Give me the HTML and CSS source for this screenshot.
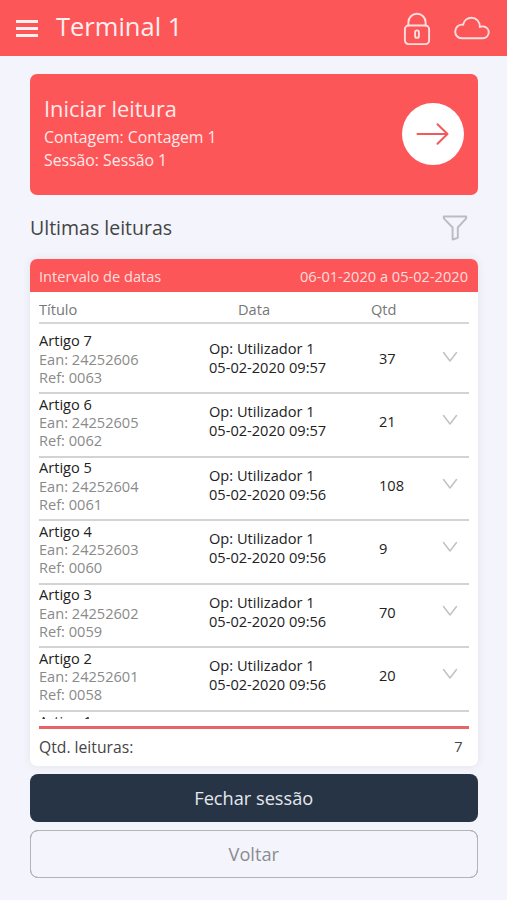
FILE: index.html
```html
<!DOCTYPE html>
<html lang="pt">
<head>
<meta charset="utf-8">
<title>Terminal 1</title>
<link rel="stylesheet" href="styles.css">
</head>
<body>
<header class="topbar">
  <div class="menu"><span></span><span></span><span></span></div>
  <h1>Terminal 1</h1>
  <svg class="lock" width="28" height="34" viewBox="0 0 28 34"><rect x="1.9" y="13.5" width="24.2" height="18.6" rx="3.6"/><path d="M5.400 13.500V10.300a8.600 8.600 0 0 1 17.200 0V13.500"/><rect x="12.100" y="18.400" width="3.800" height="7.400" rx="1.900"/></svg>
  <svg class="cloud" width="36" height="24" viewBox="0 0 36 24"><path d="M7.500 22.200h21.200a5.900 5.900 0 0 0 1.200-11.700c-1.400-.3-2.800-.1-4 .5C26 5.700 22.300 1.800 17.500 1.800c-4.200 0-7.600 2.900-8.400 6.900C4.900 8.100 1.200 11.300 1.200 15.700c0 3.500 2.700 6.500 6.300 6.500z"/></svg>
</header>
<main>
  <section class="start">
    <div>
      <h2>Iniciar leitura</h2>
      <p>Contagem: Contagem 1</p>
      <p>Sessão: Sessão 1</p>
    </div>
    <div class="go"><svg width="34" height="24" viewBox="0 0 34 24"><path d="M1.500 12H31.500M21.500 2.300L31.500 12l-10 9.700"/></svg></div>
  </section>
  <div class="heading">
    <h3>Ultimas leituras</h3>
    <svg width="26" height="26" viewBox="0 0 26 26"><path d="M1.800 1.500h22.400v1.800L15.800 12.500v10.300l-5.200 1.700v-12L1.800 3.300z"/></svg>
  </div>
  <section class="card">
    <div class="range"><span>Intervalo de datas</span><span>06-01-2020 a 05-02-2020</span></div>
    <div class="body">
      <div class="cols"><span>Título</span><span class="c-date">Data</span><span class="c-qty">Qtd</span></div>
      <div class="list">
        <div class="row"><div class="item"><b>Artigo 7</b><br>Ean: 24252606<br>Ref: 0063</div><div class="op">Op: Utilizador 1<br>05-02-2020 09:57</div><div class="qty">37</div><svg width="16" height="12" viewBox="0 0 16 12"><path d="M1.500 1.500L8 10l6.500-8.500"/></svg></div>
        <div class="row"><div class="item"><b>Artigo 6</b><br>Ean: 24252605<br>Ref: 0062</div><div class="op">Op: Utilizador 1<br>05-02-2020 09:57</div><div class="qty">21</div><svg width="16" height="12" viewBox="0 0 16 12"><path d="M1.500 1.500L8 10l6.500-8.500"/></svg></div>
        <div class="row"><div class="item"><b>Artigo 5</b><br>Ean: 24252604<br>Ref: 0061</div><div class="op">Op: Utilizador 1<br>05-02-2020 09:56</div><div class="qty">108</div><svg width="16" height="12" viewBox="0 0 16 12"><path d="M1.500 1.500L8 10l6.500-8.500"/></svg></div>
        <div class="row"><div class="item"><b>Artigo 4</b><br>Ean: 24252603<br>Ref: 0060</div><div class="op">Op: Utilizador 1<br>05-02-2020 09:56</div><div class="qty">9</div><svg width="16" height="12" viewBox="0 0 16 12"><path d="M1.500 1.500L8 10l6.500-8.500"/></svg></div>
        <div class="row"><div class="item"><b>Artigo 3</b><br>Ean: 24252602<br>Ref: 0059</div><div class="op">Op: Utilizador 1<br>05-02-2020 09:56</div><div class="qty">70</div><svg width="16" height="12" viewBox="0 0 16 12"><path d="M1.500 1.500L8 10l6.500-8.500"/></svg></div>
        <div class="row"><div class="item"><b>Artigo 2</b><br>Ean: 24252601<br>Ref: 0058</div><div class="op">Op: Utilizador 1<br>05-02-2020 09:56</div><div class="qty">20</div><svg width="16" height="12" viewBox="0 0 16 12"><path d="M1.500 1.500L8 10l6.500-8.500"/></svg></div>
        <div class="row"><div class="item"><b>Artigo 1</b></div></div>
      </div>
      <div class="total"><span>Qtd. leituras:</span><span class="sum">7</span></div>
    </div>
  </section>
  <button class="btn dark">Fechar sessão</button>
  <button class="btn light">Voltar</button>
</main>
</body>
</html>
```
FILE: styles.css
```css
* { box-sizing: border-box; margin: 0; padding: 0; }
body {
  height: 900px;
  overflow: hidden;
  background: #f3f4fc;
  font-family: "Open Sans", sans-serif;
  font-size: 14.6px;
  color: #222;
}
h1, h2, h3, b { font-weight: 400; }
svg { display: block; fill: none; stroke-linejoin: round; stroke-linecap: round; flex: none; }
.topbar {
  display: flex;
  align-items: center;
  height: 56px;
  padding: 0 17px 0 16px;
  background: #fd5659;
  color: #ffefef;
}
.menu { display: flex; flex-direction: column; gap: 4px; width: 22px; margin-top: 1px; }
.menu span { height: 3px; background: #ffefef; }
.topbar h1 { margin: -4px auto 0 18px; font-size: 25.5px; line-height: 36px; }
.lock, .cloud { stroke: #ffdede; stroke-width: 1.9; }
.lock { margin-top: 1px; }
.cloud { margin-left: 23px; }
main { padding: 18px 29.5px 0 30px; }
.start {
  display: flex;
  justify-content: space-between;
  height: 121px;
  padding: 19px 14px 0;
  border-radius: 7px;
  background: #fd5659;
  color: #ffe9e9;
}
.start h2 { margin-bottom: 1px; font-size: 21.800px; line-height: 32px; }
.start p { font-size: 15.800px; line-height: 23px; }
.go {
  display: flex;
  align-items: center;
  justify-content: center;
  width: 62px;
  height: 62px;
  margin-top: 10px;
  border-radius: 50%;
  background: #fff;
}
.go svg { stroke: #f4585c; stroke-width: 2; }
.heading {
  display: flex;
  align-items: center;
  justify-content: space-between;
  height: 64px;
  padding: 0 10px 0 0;
}
.heading h3 { font-size: 19.500px; color: #444; }
.heading svg { margin-top: 1px; stroke: #bcbcc0; stroke-width: 1.9; }
.card {
  height: 507px;
  border-radius: 7px;
  background: #fff;
  box-shadow: 0 0 9px rgba(60, 60, 60, .09);
  overflow: hidden;
}
.range {
  display: flex;
  align-items: center;
  justify-content: space-between;
  height: 33px;
  padding: 1px 9.500px 0 9px;
  background: #fd5659;
  color: #ffdede;
}
.body { padding: 0 9px; }
.cols {
  display: grid;
  grid-template-columns: 199px 133px 1fr;
  height: 31.500px;
  line-height: 34.500px;
  border-bottom: 2px solid #d6d6d6;
  color: #777;
}
.list { height: 395px; padding-top: 7px; overflow: hidden; }
.row {
  display: grid;
  grid-template-columns: 170px 170px 63px 1fr;
  height: 63.5px;
  border-bottom: 2px solid #d3d3d3;
}
.item { padding-top: .8px; line-height: 18.200px; color: #8a8a8a; }
.item b { color: #222; }
.op { padding-top: 8px; line-height: 19.400px; }
.qty { padding-top: 17px; line-height: 20px; }
.row svg { margin-top: 20px; stroke: #c2c2c2; stroke-width: 1.5; }
.total {
  display: flex;
  justify-content: space-between;
  margin-top: 7px;
  padding-right: 6px;
  border-top: 3px solid #e96366;
  line-height: 36px;
  color: #444;
}
.total span { font-size: 15.700px; }
.total .sum { font-size: 14.6px; line-height: 34px; }
.btn {
  display: block;
  width: 100%;
  height: 48px;
  margin-top: 8px;
  border: 0;
  border-radius: 8px;
  font: 400 18.200px "Open Sans", sans-serif;
}
.dark { background: #273445; color: #e4e8ed; }
.light { background: transparent; border: 1.500px solid #a0a0a4; color: #8c8c90; outline: .5px solid #b4b4b8; outline-offset: -1.500px; }
```
